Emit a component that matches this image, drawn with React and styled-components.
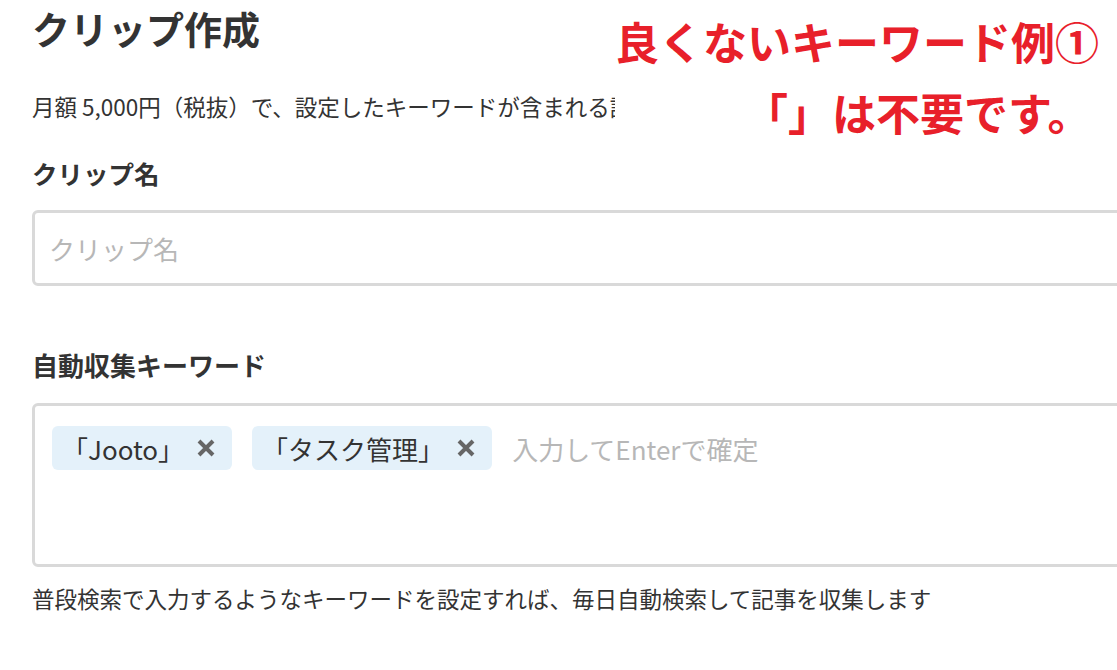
import React from 'react';
import styled, { createGlobalStyle } from 'styled-components';

const GlobalStyle = createGlobalStyle`
  html, body {
    margin: 0;
    padding: 0;
    background: #fff;
    overflow: hidden;
  }
  body {
    font-family: "Noto Sans CJK JP", "Noto Sans", sans-serif;
    color: #333;
  }
`;

const Page = styled.div`
  position: relative;
  width: 1117px;
  height: 670px;
  overflow: hidden;
  padding: 4px 0 0 32px;
  box-sizing: border-box;
`;

const Title = styled.h1`
  margin: 0;
  font-size: 38px;
  line-height: 48px;
  font-weight: 700;
  color: #333;
`;

const Description = styled.p`
  margin: 39px 0 0;
  width: 583px;
  overflow: hidden;
  font-size: 22.5px;
  line-height: 30px;
  color: #333;
  white-space: nowrap;
`;

const Label = styled.div`
  margin-top: ${(p) => p.$gap}px;
  font-size: ${(p) => p.$size}px;
  line-height: 32px;
  font-weight: 700;
  color: #333;
`;

const TextBox = styled.div`
  margin-top: 21px;
  width: 1160px;
  height: 76px;
  box-sizing: border-box;
  border: 3px solid #d9d9d9;
  border-radius: 6px;
  display: flex;
  align-items: center;
  padding-left: 14px;
  font-size: 26px;
  color: #b7b7b7;
`;

const TagBox = styled.div`
  margin-top: 22px;
  width: 1160px;
  height: 164px;
  box-sizing: border-box;
  border: 3px solid #d9d9d9;
  border-radius: 6px;
  padding: 20px 17px;
  display: flex;
  align-items: flex-start;
  gap: 20px;
`;

const Chip = styled.span`
  display: inline-flex;
  align-items: center;
  height: 44px;
  padding: 0 16px 0 10px;
  background: #e4f1fa;
  border-radius: 6px;
  font-size: 26px;
  color: #333;
  gap: 12px;
`;

const Remove = styled.svg`
  width: 20px;
  height: 20px;
  flex: none;
`;

const Placeholder = styled.span`
  height: 44px;
  display: inline-flex;
  align-items: center;
  font-size: 26px;
  color: #b7b7b7;
`;

const Help = styled.p`
  margin: 16px 0 0;
  font-size: 22.5px;
  line-height: 30px;
  color: #333;
  white-space: nowrap;
`;

const Note = styled.div`
  position: absolute;
  left: 615px;
  top: 0;
  width: 502px;
  padding-top: 6px;
  color: #e8202a;
  font-weight: 700;
  font-size: 44px;
  line-height: 71px;
`;

const NoteLine = styled.div`
  padding-left: ${(p) => p.$indent}px;
  white-space: nowrap;
`;

const CloseIcon = () => (
  <Remove viewBox="0 0 20 20">
    <path d="M3 3L17 17M17 3L3 17" stroke="#666" strokeWidth="4" />
  </Remove>
);

const App = () => (
  <>
    <GlobalStyle />
    <Page>
      <Title>クリップ作成</Title>
      <Description>月額 5,000円（税抜）で、設定したキーワードが含まれる記事を毎日自動で収集します</Description>
      <Label $gap={36} $size={25.5}>クリップ名</Label>
      <TextBox>クリップ名</TextBox>
      <Label $gap={63} $size={26}>自動収集キーワード</Label>
      <TagBox>
        <Chip>
          「Jooto」
          <CloseIcon />
        </Chip>
        <Chip>
          「タスク管理」
          <CloseIcon />
        </Chip>
        <Placeholder>入力してEnterで確定</Placeholder>
      </TagBox>
      <Help>普段検索で入力するようなキーワードを設定すれば、毎日自動検索して記事を収集します</Help>
      <Note>
        <NoteLine $indent={0}>良くないキーワード例①</NoteLine>
        <NoteLine $indent={129}>「」は不要です。</NoteLine>
      </Note>
    </Page>
  </>
);

export default App;
